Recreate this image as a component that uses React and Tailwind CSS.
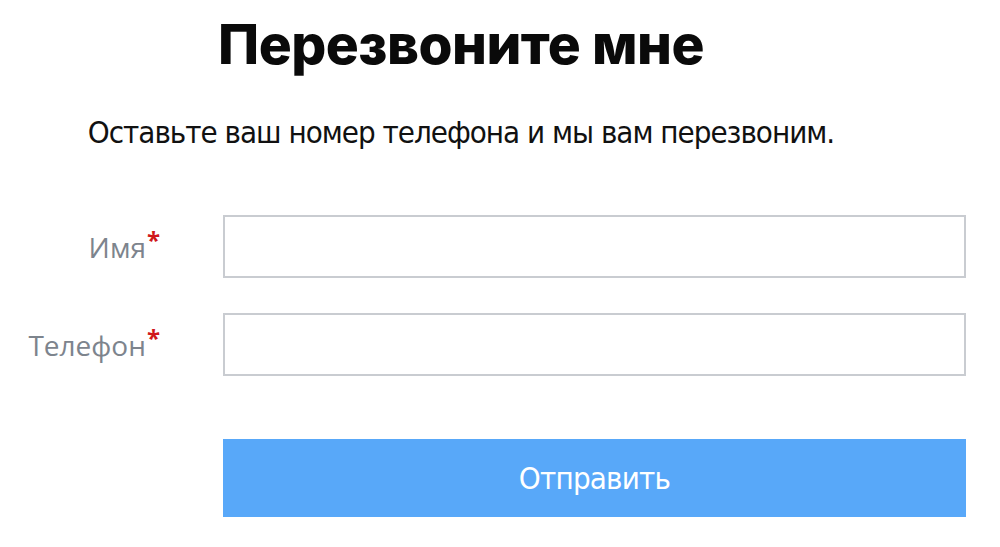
import React from 'react';

function Field({ label }) {
  return (
    <div className="flex items-center">
      <label className="w-[223px] shrink-0 pr-[63px] text-right text-[28px] text-[#7d848d] font-['Open_Sans',sans-serif] leading-none">
        {label}
        <span className="relative -top-[9px] ml-[1px] text-[24px] text-[#d0181c] font-bold">*</span>
      </label>
      <input
        type="text"
        className="h-[63px] w-[743px] border-2 border-[#c9ccd1] bg-white outline-none"
      />
    </div>
  );
}

function App() {
  return (
    <div className="w-[1000px] h-[547px] bg-white overflow-hidden">
      <div className="w-[922px]">
        {/* Title */}
        <h1 className="pt-[12px] text-center text-[55px] font-extrabold leading-[64px] text-[#0a0a0a] font-['Inter',sans-serif] tracking-[-0.5px]">
          Перезвоните мне
        </h1>

        {/* Subtitle */}
        <p className="mt-[36px] text-center text-[31px] leading-[40px] tracking-[-1px] text-[#111111] font-['Liberation_Sans_Narrow','DejaVu_Sans_Condensed',sans-serif]">
          Оставьте ваш номер телефона и мы вам перезвоним.
        </p>
      </div>

      {/* Form */}
      <div className="mt-[63px] flex flex-col gap-[35px]">
        <Field label="Имя" />
        <Field label="Телефон" />
      </div>

      <div className="mt-[63px] pl-[223px]">
        <button className="h-[78px] w-[743px] bg-[#58a8f9] text-white text-[31px] tracking-[-0.8px] font-['Liberation_Sans_Narrow','DejaVu_Sans_Condensed',sans-serif]">
          Отправить
        </button>
      </div>
    </div>
  );
}

export default App;
